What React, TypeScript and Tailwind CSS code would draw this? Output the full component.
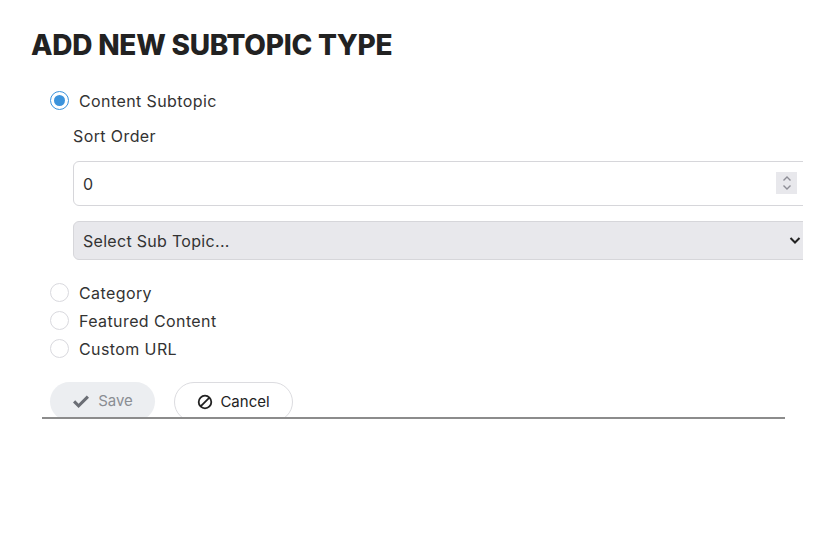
import React, { useState } from 'react'

const options = [
  { id: 'content', label: 'Content Subtopic' },
  { id: 'category', label: 'Category' },
  { id: 'featured', label: 'Featured Content' },
  { id: 'custom', label: 'Custom URL' }
]

const Radio: React.FC<{ checked: boolean; label: string; onClick: () => void }> = ({ checked, label, onClick }) => (
  <label className="flex items-center gap-[10px] cursor-pointer h-[27px]" onClick={onClick}>
    <span
      className={`w-[19px] h-[19px] rounded-full border flex items-center justify-center ${
        checked ? 'border-[#3b93dc]' : 'border-[#d9d9de]'
      }`}
    >
      {checked && <span className="w-[11px] h-[11px] rounded-full bg-[#3b93dc]" />}
    </span>
    <span className="text-[16px] text-[#333] tracking-[0.4px]">{label}</span>
  </label>
)

export default function App() {
  const [selected, setSelected] = useState('content')

  return (
    <div className="w-[830px] h-[534px] bg-white overflow-hidden" style={{ fontFamily: 'Inter, "Noto Sans", sans-serif' }}>
      <div className="w-[803px] overflow-hidden pl-[31px] pt-[29px]">
        <h1 className="text-[28px] leading-[32px] font-extrabold text-[#222] tracking-[-0.25px]">ADD NEW SUBTOPIC TYPE</h1>

        <div className="mt-[26px] pl-[19px]">
          <Radio checked={selected === 'content'} label="Content Subtopic" onClick={() => setSelected('content')} />

          {/* Content subtopic options */}
          <div className="pl-[23px] w-[780px] mt-[10px]">
            <div className="text-[16px] text-[#333] leading-[24px] tracking-[0.4px]">Sort Order</div>
            <div className="relative mt-[13px]">
              <input
                type="text"
                defaultValue="0"
                className="w-full h-[45px] border border-[#d6d6da] rounded-[6px] px-[9px] text-[16px] text-[#333] outline-none"
              />
              <span className="absolute left-[703px] top-[11px] w-[21px] h-[22px] bg-[#e8e8ec] flex flex-col items-center justify-center">
                <svg width="10" height="16" viewBox="0 0 10 16" fill="none" stroke="#8e8e96" strokeWidth="1.4">
                  <path d="M1.5 5.5 L5 2 L8.5 5.5" />
                  <path d="M1.5 10.5 L5 14 L8.5 10.5" />
                </svg>
              </span>
            </div>
            <div className="relative mt-[15px]">
              <select className="w-full h-[39px] appearance-none bg-[#e8e8ec] border border-[#d6d6da] rounded-[6px] px-[9px] text-[16px] text-[#333] tracking-[0.3px] outline-none">
                <option>Select Sub Topic...</option>
              </select>
              <svg className="absolute left-[716px] top-[15px]" width="12" height="9" viewBox="0 0 12 9" fill="none" stroke="#222" strokeWidth="2">
                <path d="M1.5 2 L6 6.5 L10.5 2" />
              </svg>
            </div>
          </div>

          <div className="mt-[19px] flex flex-col gap-[1px]">
            {options.slice(1).map((o) => (
              <Radio key={o.id} checked={selected === o.id} label={o.label} onClick={() => setSelected(o.id)} />
            ))}
          </div>

          <div className="mt-[20px] flex gap-[19px]">
            <button className="h-[39px] w-[105px] rounded-full bg-[#eceef1] flex items-center justify-center gap-[8px] text-[15px] text-[#8a8d93]">
              <svg width="18" height="14" viewBox="0 0 18 14" fill="#6b6e75">
                <path d="M1 7.5 L3.2 5.3 L6.6 8.7 L14.8 0.5 L17 2.7 L6.6 13.1 Z" />
              </svg>
              Save
            </button>
            <button className="h-[40px] w-[119px] rounded-full bg-white border border-[#dcdce0] flex items-center justify-center gap-[7px] text-[15px] text-[#222]">
              <svg width="16" height="16" viewBox="0 0 16 16" fill="none" stroke="#222" strokeWidth="1.8">
                <circle cx="8" cy="8" r="6.3" />
                <path d="M3.6 12.4 L12.4 3.6" />
              </svg>
              Cancel
            </button>
          </div>
        </div>
        <div className="ml-[11px] w-[743px] h-[2px] bg-[#8c8c8c] -mt-[5px] relative" />
      </div>
    </div>
  )
}
